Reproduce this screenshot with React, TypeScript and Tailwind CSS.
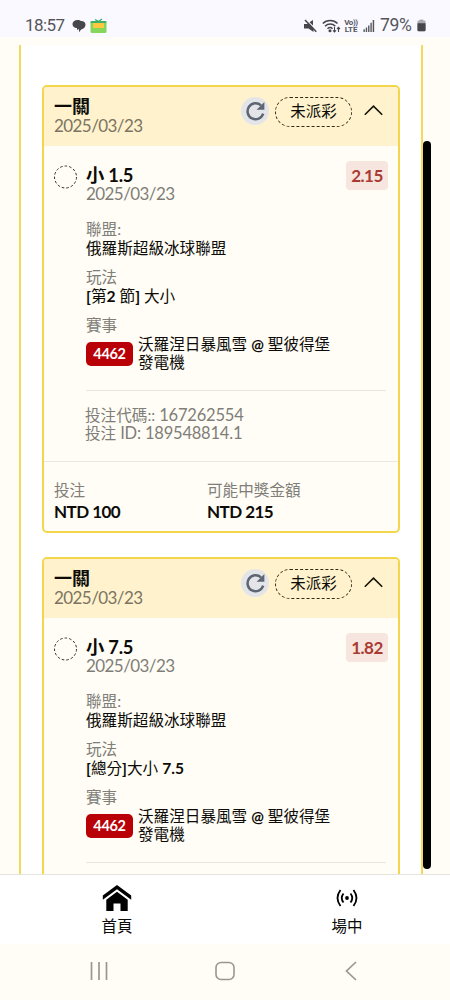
import React from "react";

type Bet = {
  title: string;
  odds: string;
  market: React.ReactNode;
  matchId: string;
};

const bets: Bet[] = [
  { title: "小 1.5", odds: "2.15", market: <><b>[</b>第<b>2</b> 節<b>]</b> 大小</>, matchId: "4462" },
  { title: "小 7.5", odds: "1.82", market: <><b>[</b>總分<b>]</b>大小 <b>7.5</b></>, matchId: "4462" },
];

function StatusBar() {
  return (
    <header className="flex h-[37px] shrink-0 items-end bg-[#f9f9ff] pr-[24px] pb-[2px] pl-[25px] font-['Roboto','Noto_Sans_CJK_TC',sans-serif] text-[17px] leading-[20px] text-[#55555b]">
      <span className="w-[40px] tracking-[-0.6px] whitespace-nowrap">18:57</span>
      <svg className="mb-[2px] ml-[7px] h-[14px] w-[14px]" viewBox="0 0 14 14" fill="#47474b">
        <path d="M5.5 1C2.600 1 .5 2.700 .5 5c0 1.600 .8 2.900 2.200 3.500C3.600 8.900 4 9 5 9v2.200L7.300 9C10 8.900 11 7 11 5 11 2.700 8.500 1 5.500 1z" />
        <path d="M8 2c3.500-.5 5.500 1.200 5.500 3.600 0 2.600-1.600 4.400-4.300 4.800L7 13.200V10.600C4.800 9.800 4 8 4.500 6z" />
      </svg>
      <svg className="mb-[1px] ml-[4px] h-[16px] w-[17px]" viewBox="0 0 17 16">
        <path d="M5 1.500l3.500 2 3.500-2.500" stroke="#38a86b" strokeWidth="1.300" fill="none" />
        <rect x=".5" y="3" width="16" height="12" rx="1.500" fill="#86d65b" />
        <rect x=".5" y="3" width="16" height="2" rx="1" fill="#42ad6a" />
        <rect x="3" y="5" width="11" height="5" rx="1" fill="#ffc83d" />
      </svg>
      <span className="grow" />
      <svg className="mb-[2px] h-[14px] w-[13px]" viewBox="0 0 13 14" fill="#47474b">
        <path d="M0 5h3l1.500-1L9.500 9v4L4.500 9.500H0z" />
        <path d="M5.500 3.300L9 1v5.600z" />
        <path d="M1 1l11.300 11.800" stroke="#47474b" strokeWidth="1.500" />
      </svg>
      <svg className="mb-[2px] ml-[5px] h-[14px] w-[19px]" viewBox="0 0 19 14" fill="none" stroke="#47474b" strokeWidth="1.500">
        <path d="M.8 4.500c4-4 10.800-4 14.700 0M3 7.200c3-3 7.500-3 10.300 0M5.500 9.700c1.600-1.500 3.800-1.500 5 0" />
        <circle cx="8" cy="11.700" r=".8" fill="#47474b" />
        <path d="M12.500 8v5m-1.500-1.600 1.500 1.600 1.500-1.600M16.500 13V8.500m-1.500 1.500 1.500-1.600L18 10" strokeWidth="1.100" />
      </svg>
      <div className="mb-[2px] ml-[3px] flex w-[14px] flex-col items-center text-[8px] leading-[7px] font-bold tracking-[-0.4px]">
        <span>Vo))</span>
        <span className="tracking-[-0.1px]">LTE</span>
      </div>
      <svg className="mb-[3px] ml-[5px] h-[12px] w-[12px]" viewBox="0 0 12 13" fill="#55555b">
        <path d="M0 10h1.500v3H0zM2.500 8H4v5H2.500zM5 6h1.500v7H5zM7.500 3H9v10H7.500zM10 0h1.600v13H10z" />
      </svg>
      <span className="ml-[5px] w-[35px] text-[17.500px] tracking-[-0.3px] whitespace-nowrap">79%</span>
      <svg className="mb-[3px] ml-[2px] h-[13px] w-[9px]" viewBox="0 0 10 13">
        <path d="M3 0h4v1.500H3z" fill="#9b9ba0" />
        <rect x=".5" y="1" width="9" height="12" rx="1.500" fill="#a9a9ad" />
        <path d="M.5 4h9v7.500q0 1.500-1.500 1.500H2Q.5 13 .5 11.500z" fill="#47474b" />
      </svg>
    </header>
  );
}

function BetCard({ title, odds, market, matchId }: Bet) {
  return (
    <article className="h-[448px] shrink-0 overflow-hidden rounded-[5px] border-2 border-[#f3d64c] bg-[#fffdf5]">
      <div className="flex h-[59px] items-start bg-[#fff2cc] pl-[10px]">
        <div className="w-[187px] pt-[9px]">
          <h2 className="text-[18px] leading-[20px] font-bold">一關</h2>
          <p className="text-[17px] leading-[20px] tracking-[-0.57px] text-[#7b7463]">2025/03/23</p>
        </div>
        <div className="mt-[10px] flex h-[28px] w-[28px] items-center justify-center rounded-full bg-[#e4e5e9]">
          <svg className="h-[20px] w-[20px]" viewBox="0 0 20 20" fill="none">
            <path d="M18.200 12.700A8 8 0 1 1 16 4.400" stroke="#5d6672" strokeWidth="2.500" />
            <path d="M19.400 1v7.800h-7.800z" fill="#5d6672" />
          </svg>
        </div>
        <div className="mt-[10px] ml-[6px] flex h-[30px] w-[77px] items-center justify-center rounded-full border border-dashed border-[#302a18] text-[15.500px]">
          未派彩
        </div>
        <svg className="mt-[17px] ml-[12px] h-[12px] w-[19px]" viewBox="0 0 19 12" fill="none" stroke="#17150d" strokeWidth="1.600">
          <path d="M.8 10.800l8.700-8.700 8.700 8.700" />
        </svg>
      </div>
      <div className="flex h-[245px] pr-[9px] pl-[10px]">
        <svg className="mt-[19px] h-[24px] w-[24px] shrink-0" viewBox="0 0 24 24" fill="none" stroke="#33322e">
          <circle cx="11.500" cy="12" r="11" strokeDasharray="2.600 2" />
        </svg>
        <div className="ml-[8px] flex w-[300px] flex-col">
          <div className="flex h-[74px] justify-between">
            <div className="pt-[19px]">
              <h3 className="text-[18.300px] leading-[20px] font-bold tracking-[-0.2px]">{title}</h3>
              <p className="text-[17px] leading-[18px] tracking-[-0.57px] text-[#807e79]">2025/03/23</p>
            </div>
            <div className="mt-[15px] mr-[-2px] flex h-[29px] w-[42px] items-center justify-center rounded-[4px] bg-[#f7e5df] text-[17px] font-bold tracking-[-0.5px] text-[#a83a32]">{odds}</div>
          </div>
          <div className="h-[48px] text-[15.600px] leading-[19px]">
            <p className="text-[#807e79]">聯盟:</p>
            <p>俄羅斯超級冰球聯盟</p>
          </div>
          <div className="h-[48px] text-[15.600px] leading-[19px]">
            <p className="text-[#807e79]">玩法</p>
            <p>{market}</p>
          </div>
          <div className="text-[15.600px] leading-[19px]">
            <p className="text-[#807e79]">賽事</p>
            <div className="mt-[1px] flex items-center">
              <span className="flex h-[24px] w-[47px] items-center justify-center rounded-[5px] bg-[#b80006] text-[14.500px] font-bold tracking-[-0.3px] text-white">{matchId}</span>
              <p className="ml-[5px] leading-[17.500px]">沃羅涅日暴風雪 <span className="text-[15px] font-bold">@</span> 聖彼得堡<br />發電機</p>
            </div>
          </div>
          <div className="mt-auto border-b border-[#e8e6df]" />
        </div>
      </div>
      <div className="h-[71px] border-b border-[#e9e8e3] pt-[15px] pl-[41px] text-[16px] leading-[18px] text-[#807e79]">
        <p className="text-[15.600px]">投注代碼:: <span className="text-[16.500px] tracking-[-0.2px]">167262554</span></p>
        <p className="text-[15.600px]">投注 <span className="text-[16.500px] tracking-[-0.2px]">ID: 189548814.1</span></p>
      </div>
      <div className="grid grid-cols-[153px_1fr] pt-[17px] pl-[10px] text-[15.600px] leading-[22px]">
        <div>
          <p className="text-[#807e79]">投注</p>
          <p className="text-[17px] leading-[21px] font-bold tracking-[-0.55px]">NTD 100</p>
        </div>
        <div>
          <p className="text-[#807e79]">可能中獎金額</p>
          <p className="text-[17px] leading-[21px] font-bold tracking-[-0.55px]">NTD 215</p>
        </div>
      </div>
    </article>
  );
}

export default function App() {
  return (
    <div className="flex h-[1000px] w-[450px] flex-col overflow-hidden bg-[#fffdf5] font-['Lato','Noto_Sans_CJK_TC',sans-serif] text-[#0c0b08]">
      <StatusBar />
      <main className="relative flex h-[837px] shrink-0 flex-col overflow-hidden pt-[8px]">
        <div className="ml-[19px] flex h-[829px] w-[404px] flex-col gap-[24px] overflow-hidden border-x-2 border-[#f3da5c] bg-white px-[21px] pt-[40px]">
          {bets.map((bet) => (
            <BetCard key={bet.title} {...bet} />
          ))}
        </div>
        <div className="absolute top-[104px] left-[423px] h-[728px] w-[8px] rounded-full bg-black" />
      </main>
      <nav className="flex h-[70px] shrink-0 justify-between border-t border-[#e5e5df] bg-white pr-[73px] pl-[87px] text-[15.500px] leading-[20px]">
        <div className="flex w-[60px] flex-col items-center pt-[9px]">
          <svg className="h-[28px] w-[30px]" viewBox="0 0 30 28" fill="#000">
            <path d="M15 1L.8 11.500v4.200L15 5.200l14.200 10.500v-4.200z" />
            <path d="M15 7.800L4.300 15.800V27h7.200v-7.500h7V27h7.200V15.800z" />
          </svg>
          <span className="mt-[4px]">首頁</span>
        </div>
        <div className="flex w-[60px] flex-col items-center pt-[14px]">
          <svg className="h-[18px] w-[22px]" viewBox="0 0 22 18" fill="none" stroke="#000" strokeWidth="1.800">
            <circle cx="11" cy="9" r="1.900" fill="#000" stroke="none" />
            <path d="M7.500 4.500Q4 9 7.500 13.500M14.500 4.500Q18 9 14.500 13.500M4.500 1Q-1.500 9 4.500 17M17.500 1Q23.500 9 17.500 17" />
          </svg>
          <span className="mt-[9px]">場中</span>
        </div>
      </nav>
      <footer className="flex grow items-center pb-[2px] pl-[90px]">
        <svg className="h-[20px] w-[18px]" viewBox="0 0 18 20" stroke="#99978f" strokeWidth="1.700">
          <path d="M1.500 1v18M9 1v18M16.500 1v18" />
        </svg>
        <svg className="ml-[107px] h-[20px] w-[20px]" viewBox="0 0 20 20" fill="none" stroke="#99978f" strokeWidth="1.600">
          <rect x="1" y="1.500" width="18" height="17" rx="5" />
        </svg>
        <svg className="ml-[110px] h-[20px] w-[12px]" viewBox="0 0 12 20" fill="none" stroke="#99978f" strokeWidth="1.700">
          <path d="M11 1L1.500 10 11 19" />
        </svg>
      </footer>
    </div>
  );
}
